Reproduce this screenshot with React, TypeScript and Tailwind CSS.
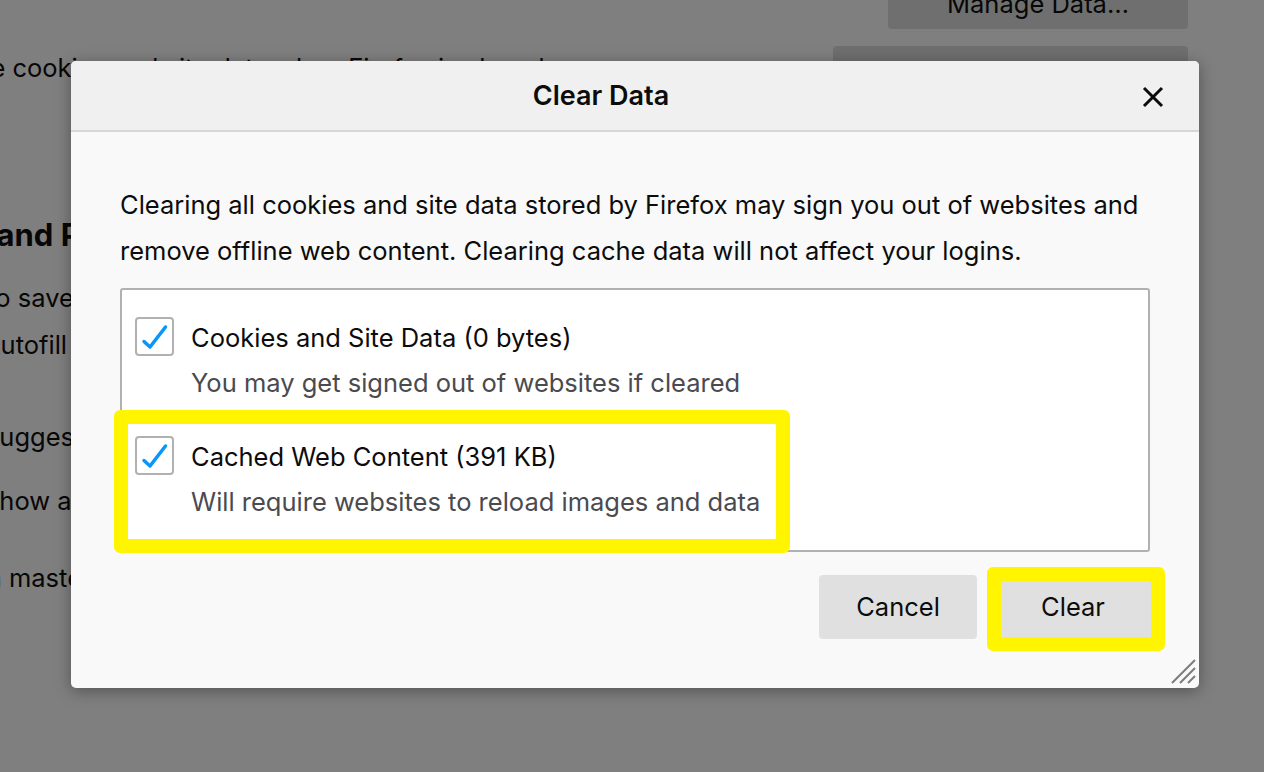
const items = [
  {
    label: "Cookies and Site Data (0 bytes)",
    hint: "You may get signed out of websites if cleared",
  },
  {
    label: "Cached Web Content (391 KB)",
    hint: "Will require websites to reload images and data",
  },
];

function CheckBox() {
  return (
    <div className="w-[39px] h-[39px] shrink-0 rounded-[4px] border-2 border-[#b1b1b3] bg-white flex items-center justify-center">
      <svg width="35" height="35" viewBox="0 0 35 35" fill="none">
        <path
          d="M7 22.5 L13 28 L28.5 8"
          stroke="#0996f8"
          strokeWidth="3.5"
          strokeLinecap="round"
          strokeLinejoin="round"
        />
      </svg>
    </div>
  );
}

// page behind the modal, dimmed
function BackgroundPage() {
  return (
    <div className="flex flex-col text-[25.5px] leading-[32px] text-[#070707]">
      <div className="flex justify-end pr-[76px]">
        <div className="-mt-[35px] w-[300px] h-[64px] rounded-[4px] bg-[#6f6f6f] flex items-center justify-center pt-[14px]">
          Manage Data…
        </div>
      </div>
      <div className="mt-[17px] flex justify-between items-start pr-[76px]">
        <div className="mt-[6px] -ml-[72px] whitespace-nowrap">
          Delete cookies and site data when Firefox is closed
        </div>
        <div className="w-[355px] h-[64px] rounded-[4px] bg-[#6f6f6f]" />
      </div>
      <div className="mt-[105px] -ml-[112px] text-[31px] leading-[40px] font-bold whitespace-nowrap">
        Logins and Passwords
      </div>
      <div className="mt-[27px] -ml-[65px] whitespace-nowrap">Ask to save logins and passwords for websites</div>
      <div className="mt-[15px] -ml-[17px] whitespace-nowrap">Autofill logins and passwords</div>
      <div className="mt-[60px] -ml-[17px] whitespace-nowrap">Suggest and generate strong passwords</div>
      <div className="mt-[32px] -ml-[17px] whitespace-nowrap">Show alerts about passwords for breached websites</div>
      <div className="mt-[45px] -ml-[67px] whitespace-nowrap">Use a master password</div>
    </div>
  );
}

export default function App() {
  return (
    <div className="relative w-[1264px] h-[772px] overflow-hidden bg-[#7f7f7f] font-['Inter',sans-serif] antialiased">
      <BackgroundPage />

      <div className="absolute left-[71px] top-[61px] w-[1128px] h-[627px] rounded-[5px] overflow-hidden flex flex-col bg-[#f9f9f9] shadow-[0_3px_16px_rgba(0,0,0,0.35)]">
        <div className="h-[71px] shrink-0 bg-[#f0f0f0] border-b-2 border-[#d7d7db] flex items-center">
          <div className="flex-1 text-center text-[27px] font-semibold text-[#0c0c0d] pt-[2px]">Clear Data</div>
          <div className="w-[68px] pl-[11px] pt-[2px] flex">
            <svg width="22" height="22" viewBox="0 0 22 22">
              <path d="M2 2 L20 20 M20 2 L2 20" stroke="#0c0c0d" strokeWidth="3" />
            </svg>
          </div>
        </div>

        <div className="flex-1 flex flex-col px-[49px] pt-[50px]">
          <p className="text-[25.5px] leading-[46px] text-[#0c0c0d] whitespace-nowrap">
            Clearing all cookies and site data stored by Firefox may sign you out of websites and
            <br />
            remove offline web content. Clearing cache data will not affect your logins.
          </p>

          <div className="mt-[14px] h-[264px] rounded-[3px] border-2 border-[#b1b1b3] bg-white pt-[27px] pl-[13px] flex flex-col gap-[37px]">
            {items.map((it) => (
              <div key={it.label} className="flex flex-col">
                <div className="flex items-center gap-[17px]">
                  <CheckBox />
                  <span className="text-[25.5px] leading-[32px] text-[#0c0c0d] pt-[2px]">{it.label}</span>
                </div>
                <div className="mt-[11px] pl-[56px] text-[25.5px] leading-[32px] text-[#4a4a4f]">{it.hint}</div>
              </div>
            ))}
          </div>

          <div className="mt-[23px] -mr-[2px] flex justify-end gap-[17px]">
            <button className="w-[158px] h-[64px] rounded-[4px] bg-[#e0e0e1] text-[25.5px] text-[#0c0c0d]">
              Cancel
            </button>
            <button className="w-[158px] h-[64px] rounded-[4px] bg-[#e0e0e1] text-[25.5px] text-[#0c0c0d]">
              Clear
            </button>
          </div>
        </div>

        {/* highlight marks drawn over the screenshot */}
        <div className="absolute left-[43px] top-[349px] w-[676px] h-[143px] rounded-[6px] border-[14px] border-[#fff500]" />
        <div className="absolute left-[916px] top-[506px] w-[178px] h-[84px] rounded-[6px] border-[14px] border-[#fff500]" />

        <svg className="absolute right-[3px] bottom-[4px]" width="25" height="25" viewBox="0 0 25 25">
          <path d="M1 24 L24 1 M9 24 L24 9 M17 24 L24 17" stroke="#7c7c7c" strokeWidth="2" />
        </svg>
      </div>
    </div>
  );
}
